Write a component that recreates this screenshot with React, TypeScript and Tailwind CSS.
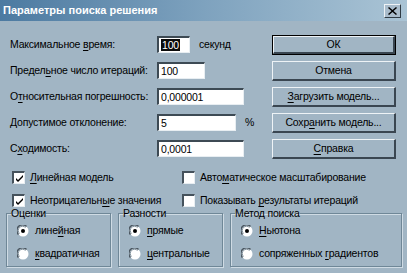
import React from "react";

const U = ({ c }: { c: string }) => <span className="underline underline-offset-[2px] decoration-[1px]">{c}</span>;

function Input({ w, value, selected }: { w: number; value: string; selected?: boolean }) {
  return (
    <div
      className="h-[17px] bg-white border-t-2 border-l-2 border-t-[#3d4a54] border-l-[#3d4a54] border-b border-r border-b-[#e8eef2] border-r-[#e8eef2] flex items-center pl-[2px]"
      style={{ width: w }}
    >
      <span className={selected ? "bg-[#0a0a0a] text-white px-[1px] leading-[12px]" : "leading-[12px]"}>{value}</span>
    </div>
  );
}

function Btn({ children, def }: { children: React.ReactNode; def?: boolean }) {
  return (
    <div className={def ? "h-[20px] w-[124px] border border-black" : "h-[20px] w-[124px]"}>
      <div className="h-full w-full border-t border-l border-t-[#eef3f6] border-l-[#eef3f6] border-b-2 border-r-2 border-b-[#3a4651] border-r-[#3a4651] flex items-center justify-center whitespace-nowrap">
        {children}
      </div>
    </div>
  );
}

function Check({ checked }: { checked: boolean }) {
  return (
    <div className="w-[13px] h-[13px] bg-white border-t-2 border-l-2 border-t-[#45525c] border-l-[#45525c] border-b border-r border-b-[#e8eef2] border-r-[#e8eef2] flex items-center justify-center">
      {checked && (
        <svg width="9" height="9" viewBox="0 0 9 9">
          <path d="M1 4 L3 6 L8 1 L8 3 L3 8 L1 6 Z" fill="#000" />
        </svg>
      )}
    </div>
  );
}

function Radio({ on }: { on: boolean }) {
  return (
    <svg width="12" height="12" viewBox="0 0 12 12">
      <circle cx="6" cy="6" r="5.5" fill="#fff" />
      <path d="M1.5 9.5 A5.5 5.5 0 0 1 9.5 1.5" stroke="#4a5660" strokeWidth="1.5" fill="none" />
      <path d="M2.5 8.5 A4 4 0 0 1 8.5 2.5" stroke="#7e8f9b" strokeWidth="1" fill="none" />
      {on && <circle cx="6" cy="6" r="2" fill="#000" />}
    </svg>
  );
}

function Row({ label, children }: { label: React.ReactNode; children: React.ReactNode }) {
  return (
    <div className="flex items-center h-[17px]">
      <div className="w-[147px] whitespace-nowrap">{label}</div>
      {children}
    </div>
  );
}

function Group({ title, w, items }: { title: string; w: number; items: { on: boolean; label: React.ReactNode }[] }) {
  return (
    <fieldset
      className="border border-[#6f8797] shadow-[1px_1px_0_#cfdbe4,inset_1px_1px_0_#cfdbe4] px-[10px] pb-[6px]"
      style={{ width: w }}
    >
      <legend className="px-0 -ml-[6px] leading-[12px]">{title}</legend>
      <div className="flex flex-col gap-[10px] pt-[5px]">
        {items.map((it, i) => (
          <div key={i} className="flex items-center gap-[6px] h-[13px] whitespace-nowrap">
            <Radio on={it.on} />
            <span>{it.label}</span>
          </div>
        ))}
      </div>
    </fieldset>
  );
}

export default function App() {
  return (
    <div className="w-[407px] h-[273px] bg-[#a1b5c4] text-black text-[10.5px] tracking-[-0.2px] leading-[13px] overflow-hidden font-['Liberation_Sans',Arial,sans-serif]">
      <div className="h-[21px] flex items-center justify-between pl-[3px] pr-[6px] bg-gradient-to-r from-[#4c7aa1] via-[#7ea2be] to-[#aac4d5]">
        <span className="text-white font-bold text-[11px] tracking-[0px]">Параметры поиска решения</span>
        <div className="w-[17px] h-[14px] bg-[#a9bccb] border-t border-l border-t-[#eef3f6] border-l-[#eef3f6] border-b border-r border-b-[#2f3b44] border-r-[#2f3b44] flex items-center justify-center">
          <svg width="9" height="8" viewBox="0 0 9 8">
            <path d="M1 0 L4.5 3 L8 0 L9 1 L5.5 4 L9 7 L8 8 L4.5 5 L1 8 L0 7 L3.5 4 L0 1 Z" fill="#000" />
          </svg>
        </div>
      </div>

      <div className="flex pl-[10px] pt-[14px]">
        <div className="w-[262px] flex flex-col gap-[9px] pt-[1px]">
          <Row label={<>Максимальное <U c="в" />ремя:</>}>
            <Input w={33} value="100" selected />
            <span className="ml-[9px]">секунд</span>
          </Row>
          <Row label={<>Предел<U c="ь" />ное число итераций:</>}>
            <Input w={48} value="100" />
          </Row>
          <Row label={<>О<U c="т" />носительная погрешность:</>}>
            <Input w={87} value="0,000001" />
          </Row>
          <Row label={<>Допустимое отклонение:</>}>
            <Input w={79} value="5" />
            <span className="ml-[9px]">%</span>
          </Row>
          <Row label={<>С<U c="х" />одимость:</>}>
            <Input w={87} value="0,0001" />
          </Row>
        </div>
        <div className="flex flex-col gap-[6px]">
          <Btn def>ОК</Btn>
          <Btn>Отмена</Btn>
          <Btn><U c="З" />агрузить модель...</Btn>
          <Btn>Сохр<U c="а" />нить модель...</Btn>
          <Btn><U c="С" />правка</Btn>
        </div>
      </div>

      <div className="grid grid-cols-[170px_1fr] gap-y-[10px] pl-[12px] pt-[12px] whitespace-nowrap">
        <div className="flex items-center gap-[5px]"><Check checked /><span><U c="Л" />инейная модель</span></div>
        <div className="flex items-center gap-[5px]"><Check checked={false} /><span>Авто<U c="м" />атическое масштабирование</span></div>
        <div className="flex items-center gap-[5px]"><Check checked /><span>Неотрицательн<U c="ы" />е значения</span></div>
        <div className="flex items-center gap-[5px]"><Check checked={false} /><span>Показывать <U c="р" />езультаты итераций</span></div>
      </div>

      <div className="flex gap-[7px] pl-[6px]">
        <Group title="Оценки" w={105} items={[{ on: true, label: <>лине<U c="й" />ная</> }, { on: false, label: <><U c="к" />вадратичная</> }]} />
        <Group title="Разности" w={105} items={[{ on: true, label: <><U c="п" />рямые</> }, { on: false, label: <><U c="ц" />ентральные</> }]} />
        <Group title="Метод поиска" w={172} items={[{ on: true, label: <><U c="Н" />ьютона</> }, { on: false, label: <>сопряженных <U c="г" />радиентов</> }]} />
      </div>
    </div>
  );
}
